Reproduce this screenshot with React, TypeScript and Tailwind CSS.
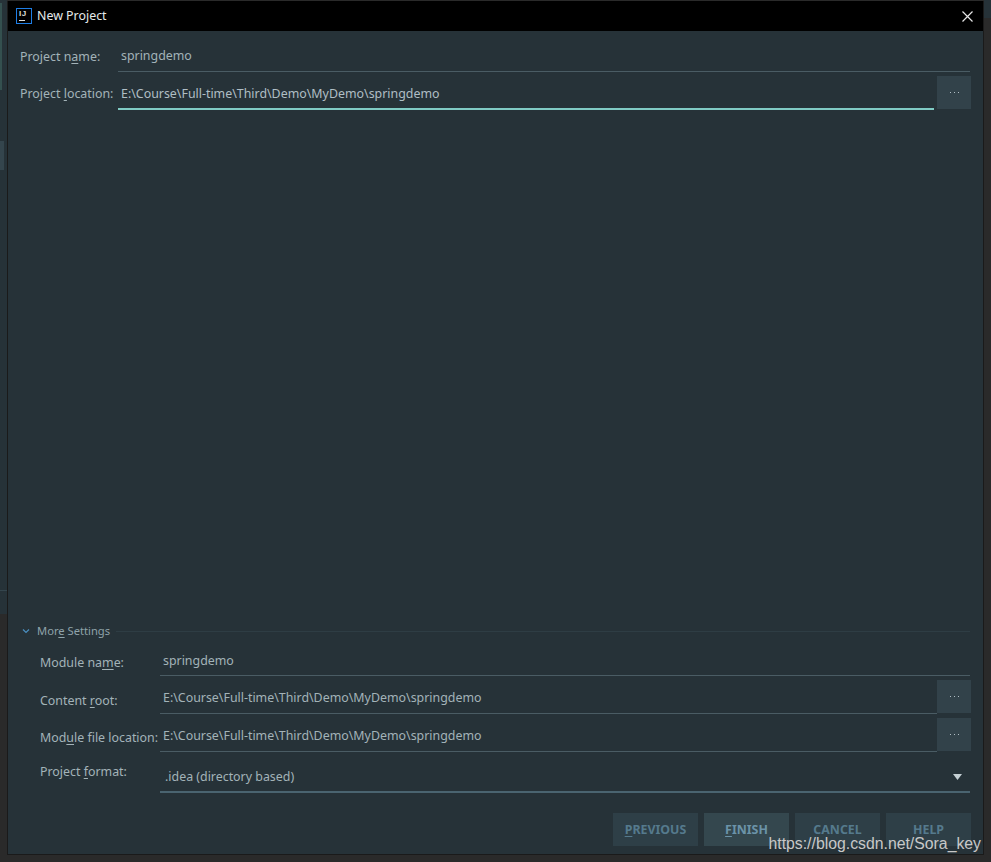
const font = "font-['Noto_Sans','Open_Sans',sans-serif]"

// underlined mnemonic letter in a label
function Label({ before, mnemonic, after }: { before: string; mnemonic: string; after: string }) {
  return (
    <span className="text-[12.4px] leading-[18px] text-[#a3b3b8] whitespace-nowrap">
      {before}
      <span className="underline underline-offset-2">{mnemonic}</span>
      {after}
    </span>
  )
}

function BrowseButton() {
  return (
    <div className="w-[34px] h-[33px] bg-[#32424a] flex items-center justify-center shrink-0">
      <svg width="9" height="1" viewBox="0 0 9 1">
        <path d="M0 0h1v1H0zM4 0h1v1H4zM8 0h1v1H8z" fill="#b0bec5" />
      </svg>
    </div>
  )
}

function PathField({ value, active = false }: { value: string; active?: boolean }) {
  return (
    <div
      className={
        active
          ? 'flex-1 h-[34px] flex items-center pl-[3px] pt-[4px] text-[12.4px] text-[#b0bec5] border-b-2 border-[#80cbc4]'
          : 'flex-1 h-[34px] flex items-center pl-[3px] pt-[4px] text-[12.4px] text-[#a3b3b8] border-b border-[#4a5c64]'
      }
    >
      {value}
    </div>
  )
}

const path = 'E:\\Course\\Full-time\\Third\\Demo\\MyDemo\\springdemo'

function FooterButton({ children, active = false }: { children: React.ReactNode; active?: boolean }) {
  return (
    <div
      className={
        active
          ? 'w-[85px] h-[33px] flex items-center justify-center pt-[2px] bg-[#34474e] text-[12.4px] font-bold text-[#6b93a8]'
          : 'w-[85px] h-[33px] flex items-center justify-center pt-[2px] bg-[#2e3f47] text-[12.4px] font-bold text-[#557a8d]'
      }
    >
      {children}
    </div>
  )
}

export default function App() {
  return (
    <div className={`relative w-[991px] h-[862px] bg-[#2a2a2a] overflow-hidden ${font}`}>
      {/* IDE window showing behind the dialog */}
      <div className="absolute left-0 top-0 w-[7px] h-[614px] bg-[#263238]" />
      <div className="absolute left-0 top-[3px] w-[2px] h-[87px] bg-[#34504f]" />
      <div className="absolute left-0 top-[141px] w-[4px] h-[29px] bg-[#34454d]" />
      <div className="absolute left-0 top-[590px] w-[7px] h-px bg-[#34454d]" />
      <div className="absolute right-0 top-0 w-[7px] h-[18px] bg-[#263238]" />

      <div className="relative flex h-[862px] pl-[7px] pr-[7px] pt-px pb-[7px]">
        <div className="flex-1 flex flex-col bg-[#263238] border-l border-r border-b border-[#1a1a1a]">
          {/* Title bar */}
          <div className="h-[30px] bg-black flex items-center shrink-0 pl-[8px] pr-[10px]">
            <svg width="16" height="16" viewBox="0 0 16 16" className="shrink-0">
              <rect x="0.5" y="0.5" width="15" height="15" fill="#000" stroke="#1e7ee6" />
              <text x="3" y="8.2" fontSize="8" fontWeight="700" letterSpacing="0.5" fill="#ddd" fontFamily="Liberation Sans">IJ</text>
              <rect x="3" y="12" width="6" height="1" fill="#ddd" />
            </svg>
            <span className="ml-[5px] text-[12.4px] text-[#e4e9ea]">New Project</span>
            <svg width="11" height="11" viewBox="0 0 11 11" className="ml-auto">
              <path d="M0.5 0.5L10.5 10.5M10.5 0.5L0.5 10.5" stroke="#e6e6e6" strokeWidth="1.2" fill="none" />
            </svg>
          </div>

          <div className="flex-1 flex flex-col pl-[12px] pr-[13px]">
            {/* Project rows */}
            <div className="flex items-center h-[41px] pt-[7px]">
              <div className="w-[98px] shrink-0"><Label before="Project n" mnemonic="a" after="me:" /></div>
              <div className="flex-1 h-[34px] flex items-center pl-[3px] pt-[4px] text-[12.4px] text-[#a3b3b8] border-b border-[#4a5c64]">springdemo</div>
            </div>
            <div className="flex items-start mt-[4px]">
              <div className="w-[98px] shrink-0 pt-[4px]"><Label before="Project " mnemonic="l" after="ocation:" /></div>
              <PathField value={path} active />
              <div className="ml-[3px] -mr-px"><BrowseButton /></div>
            </div>

            <div className="flex-1" />

            {/* More Settings */}
            <div className="flex items-center h-[18px]">
              <svg width="8" height="6" viewBox="0 0 8 6" className="ml-[2px]">
                <path d="M1 1.5L4 4.5L7 1.5" stroke="#4a8fc0" strokeWidth="1.2" fill="none" />
              </svg>
              <span className="ml-[7px] text-[11.2px] text-[#8fa3aa] whitespace-nowrap">
                Mor<span className="underline underline-offset-2">e</span> Settings
              </span>
              <div className="flex-1 ml-[6px] h-px bg-[#2e3d44]" />
            </div>

            <div className="pl-[20px] mt-[2px] flex flex-col">
              <div className="flex items-start h-[38px]">
                <div className="w-[120px] shrink-0 pt-[7px]"><Label before="Module na" mnemonic="m" after="e:" /></div>
                <div className="flex-1 h-[34px] flex items-center pl-[3px] pt-[5px] text-[12.4px] text-[#a3b3b8] border-b border-[#4a5c64]">springdemo</div>
              </div>
              <div className="flex items-start h-[38px]">
                <div className="w-[120px] shrink-0 pt-[7px]"><Label before="Content " mnemonic="r" after="oot:" /></div>
                <PathField value={path} />
                <div className="-mr-px"><BrowseButton /></div>
              </div>
              <div className="flex items-start h-[38px]">
                <div className="w-[120px] shrink-0 pt-[6px]"><Label before="Mod" mnemonic="u" after="le file location:" /></div>
                <PathField value={path} />
                <div className="-mr-px"><BrowseButton /></div>
              </div>
              <div className="flex items-start h-[37px]">
                <div className="w-[120px] shrink-0 pt-[2px]"><Label before="Project " mnemonic="f" after="ormat:" /></div>
                <div className="flex-1 h-[37px] flex items-center pl-[5px] pr-[8px] pt-[8px] text-[12.4px] text-[#a3b3b8] border-b-2 border-[#4a6470]">
                  .idea (directory based)
                  <svg width="9" height="6" viewBox="0 0 9 6" className="ml-auto mb-[2px]">
                    <path d="M0 0H9L4.5 6Z" fill="#c5d0d4" />
                  </svg>
                </div>
              </div>
            </div>

            {/* Footer */}
            <div className="flex justify-end gap-[6px] mt-[20px] mb-[8px] -mr-px">
              <FooterButton><span className="underline underline-offset-2">P</span>REVIOUS</FooterButton>
              <FooterButton active><span className="underline underline-offset-2">F</span>INISH</FooterButton>
              <FooterButton>CANCEL</FooterButton>
              <FooterButton>HELP</FooterButton>
            </div>
          </div>
        </div>
      </div>

      {/* blog watermark */}
      <div className="absolute right-[10px] bottom-[8px] text-[15.8px] leading-[20px] text-[#c8c8c8] font-['Liberation_Sans',sans-serif]">
        https://blog.csdn.net/Sora_key
      </div>
    </div>
  )
}
